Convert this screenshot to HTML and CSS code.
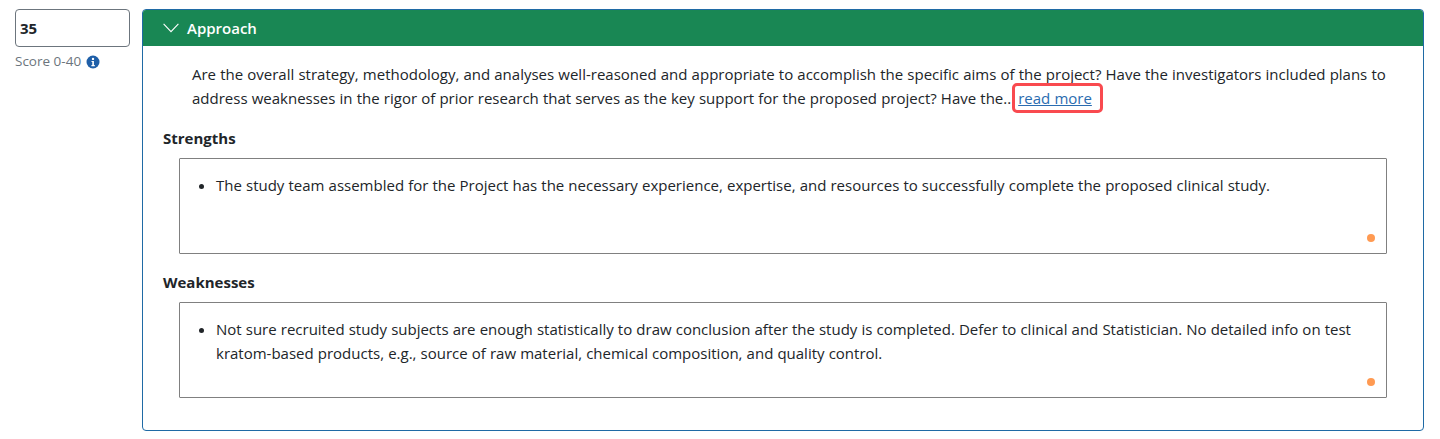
FILE: index.html
```html
<!DOCTYPE html>
<html lang="en">
<head>
    <meta charset="UTF-8">
    <title>Approach</title>
    <link rel="stylesheet" href="styles.css">
</head>
<body>

<div class="page">
    <div class="score">
        <input class="score-input" type="text" value="35">
        <div class="score-hint">
            <span>Score 0-40</span>
            <svg class="info-icon" viewBox="0 0 14 14" width="14" height="14">
                <circle cx="7" cy="7" r="6.5" fill="#1f5fa8"/>
                <circle cx="7" cy="3.9" r="1.2" fill="#fff"/>
                <path d="M5.5 6h2.4v4.1h.9v1.1H5.4v-1.1h.9V7.1h-.8z" fill="#fff"/>
            </svg>
        </div>
    </div>

    <div class="panel">
        <div class="panel-header">
            <svg class="chevron" viewBox="0 0 16 10" width="16" height="10">
                <path d="M.6.9 8 8.6 15.4.9" fill="none" stroke="#fff" stroke-width="1.1"/>
            </svg>
            <span>Approach</span>
        </div>
        <div class="panel-body">
            <p class="question">Are the overall strategy, methodology, and analyses well-reasoned and appropriate to accomplish the specific aims of the project? Have the investigators included plans to address weaknesses in the rigor of prior research that serves as the key support for the proposed project? Have the..<a class="read-more" href="#">read more</a></p>

            <h2 class="label">Strengths</h2>
            <div class="comment">
                <ul>
                    <li>The study team assembled for the Project has the necessary experience, expertise, and resources to successfully complete the proposed clinical study.</li>
                </ul>
                <span class="dot"></span>
            </div>

            <h2 class="label">Weaknesses</h2>
            <div class="comment">
                <ul>
                    <li>Not sure recruited study subjects are enough statistically to draw conclusion after the study is completed. Defer to clinical and Statistician. No detailed info on test kratom-based products, e.g., source of raw material, chemical composition, and quality control.</li>
                </ul>
                <span class="dot"></span>
            </div>
        </div>
    </div>
</div>

</body>
</html>
```

FILE: styles.css
```css
* {
    box-sizing: border-box;
}

body {
    margin: 0;
    font-family: "Open Sans", "Noto Sans", sans-serif;
    font-size: 15px;
    line-height: 24px;
    color: #212529;
    background-color: #fff;
    overflow: hidden;
}

.page {
    display: flex;
    align-items: flex-start;
    gap: 12px;
    padding: 9px 16px 0 15px;
}

/* Score column */
.score {
    width: 115px;
    flex-shrink: 0;
}

.score-input {
    display: block;
    width: 100%;
    height: 38px;
    padding: 0 4px;
    border: 1px solid #6c757d;
    border-radius: 4px;
    font-family: inherit;
    font-size: 15px;
    font-weight: 700;
    color: #212529;
}

.score-hint {
    display: flex;
    align-items: center;
    gap: 5px;
    margin-top: 2px;
    font-size: 13.5px;
    color: #6c757d;
}

.info-icon {
    margin-top: 2px;
}

/* Panel */
.panel {
    flex: 1;
    height: 422px;
    border: 1px solid #1f6aa5;
    border-radius: 4px;
}

.panel-header {
    display: flex;
    align-items: center;
    gap: 8px;
    height: 36px;
    padding-left: 20px;
    background-color: #198754;
    color: #fff;
    font-weight: 600;
    border-radius: 3px 3px 0 0;
}

.panel-body {
    padding: 16px 20px 0 20px;
}

.question {
    margin: 0 0 17px 29px;
    word-spacing: 0.25px;
}

.read-more {
    padding: 2px 8px 2px 3px;
    margin-left: 1px;
    color: #2a6cb0;
    border: 3px solid #f94a4f;
    border-radius: 5px;
}

.label {
    margin: 0 0 8px;
    font-size: 15px;
    line-height: 23px;
    font-weight: 700;
}

.comment {
    position: relative;
    height: 96px;
    margin: 0 16px 17px 16px;
    padding: 14px 24px 0 0;
    border: 1px solid #808080;
    border-radius: 1px;
    word-spacing: 0.2px;
}

.comment ul {
    margin: 0;
    padding-left: 36px;
}

.dot {
    position: absolute;
    right: 11px;
    bottom: 11px;
    width: 8px;
    height: 8px;
    border-radius: 50%;
    background-color: #ff9a52;
}
```
